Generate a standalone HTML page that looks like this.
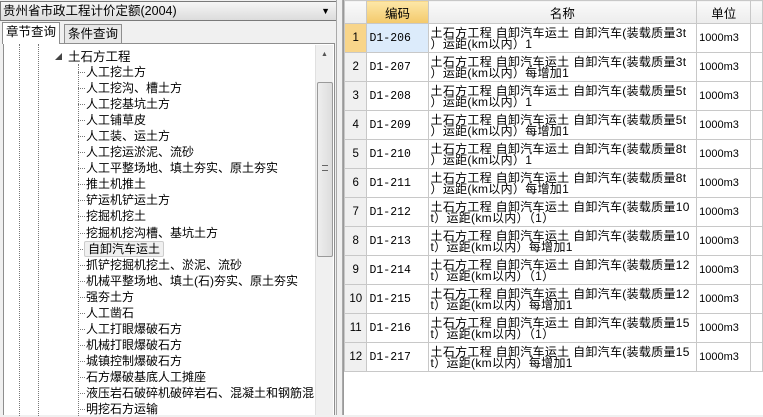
<!DOCTYPE html>
<html><head><meta charset="utf-8"><style>
*{margin:0;padding:0;box-sizing:border-box}
body{width:763px;height:415px;background:#f0f0f0;font-family:"Liberation Sans","Noto Sans CJK SC","WenQuanYi Zen Hei",sans-serif;font-size:12px;color:#000;position:relative;overflow:hidden}
.abs{position:absolute}
.dd{left:0;top:1px;width:337px;height:20px;border:1px solid #7a7a7a;background:linear-gradient(#f6f6f6,#dcdcdc);font-size:12.5px;line-height:18px;padding-left:2px}
.tab{top:24px;height:19px;border:1px solid #8e8e8e;border-bottom:none;background:#e8e8e8;line-height:18px;padding:0 3px;font-size:12.5px}
.tree{left:3px;top:43px;width:332px;height:372px;border:1px solid #8e8e8e;border-bottom:none;background:#fff}
.vl{border-left:1px dotted #777;width:0}
.it{left:86px;height:16px;line-height:16px;white-space:nowrap;font-size:12px}
.hd{left:78px;width:7px;border-top:1px dotted #777}
.sb{left:315px;top:45px;width:18px;height:370px;background:#f0f0f0;border-left:1px solid #e0e0e0}
.grid{left:343px;top:0;width:420px;height:415px;background:#fff;border-left:1px solid #999}
table{border-collapse:collapse;position:absolute;left:0;top:0;font-size:11px;table-layout:fixed}
td{border:1px solid #c8c8c8;height:29px;line-height:11px;vertical-align:middle;padding-left:2px;overflow:hidden;white-space:nowrap}
th{height:23px;font-weight:normal;font-size:12.5px;border:1px solid #c8c8c8;background:linear-gradient(#fafafa,#ececec)}
td.n{background:#f0f0f0;text-align:center;padding:0;font-size:11.5px}
td.c{font-family:"Liberation Mono",monospace;font-size:11.5px}
.nm{font-size:12px;line-height:11.5px;letter-spacing:0.3px;padding-top:2px}
</style></head><body>
<div class="abs dd">贵州省市政工程计价定额(2004)<span class="abs" style="right:6px;top:0;font-size:9px">▼</span></div>
<div class="abs tab" style="left:2px;top:22px;height:22px;background:#fff;z-index:2;border-color:#8e8e8e">章节查询</div>
<div class="abs tab" style="left:64px">条件查询</div>
<div class="abs tree">
<div class="abs vl" style="left:15px;top:0;height:372px"></div>
<div class="abs vl" style="left:34px;top:0;height:372px"></div>
<div class="abs vl" style="left:74px;top:20px;height:352px"></div>
<div class="abs" style="left:51px;top:8px;font-size:7px;color:#444">◢</div>
<div class="abs it" style="left:64px;top:5px;font-size:12.5px">土石方工程</div>
</div>
<div id="items"></div>
<div class="abs sb"><div class="abs" style="left:5px;top:6px;font-size:7px;color:#555">▲</div>
<div class="abs" style="left:1px;top:37px;width:16px;height:175px;border:1px solid #9a9a9a;border-radius:2px;background:linear-gradient(90deg,#eee,#ddd)"><div style="position:absolute;left:4px;top:82px;width:6px;height:6px;border-top:1px solid #666;border-bottom:1px solid #666"></div></div></div>
<div class="abs" style="left:336px;top:0;width:7px;height:415px;background:#f0f0f0;border-left:1px solid #aaa;border-right:1px solid #aaa"></div>
<div class="abs grid">
<table>
<tr><th style="width:23px"></th><th style="width:62px;background:linear-gradient(#fde7a8,#f3c96b)">编码</th><th style="width:269px">名称</th><th style="width:55px">单位</th><th style="width:12px"></th></tr>
<tbody id="rows"></tbody>
</table>
</div>
<script>
var t=["人工挖土方","人工挖沟、槽土方","人工挖基坑土方","人工铺草皮","人工装、运土方","人工挖运淤泥、流砂","人工平整场地、填土夯实、原土夯实","推土机推土","铲运机铲运土方","挖掘机挖土","挖掘机挖沟槽、基坑土方","自卸汽车运土","抓铲挖掘机挖土、淤泥、流砂","机械平整场地、填土(石)夯实、原土夯实","强夯土方","人工凿石","人工打眼爆破石方","机械打眼爆破石方","城镇控制爆破石方","石方爆破基底人工摊座","液压岩石破碎机破碎岩石、混凝土和钢筋混","明挖石方运输"];
var h="";t.forEach(function(s,i){var y=64+i*16.05;h+='<div class="abs hd" style="top:'+(y+8)+'px"></div><div class="abs it" style="top:'+y+'px;'+(i==11?'background:#f0f0f0;border:1px solid #ccc;border-radius:2px;padding:0 3px;left:84px;line-height:14px':'')+(i==20?'width:229px;overflow:hidden':'')+'">'+s+'</div>';});
document.getElementById("items").innerHTML=h;
var w=["3t","3t","5t","5t","8t","8t","10","10","12","12","15","15"],r="";
for(var i=0;i<12;i++){var a=i%2==0?(i<6?"1":"（1）"):"每增加1";var pre=i>=6?"t":"";
r+='<tr><td class="n"'+(i==0?' style="background:#f8d58a"':'')+'>'+(i+1)+'</td><td class="c"'+(i==0?' style="background:#dcebfb"':'')+'>D1-'+(206+i)+'</td><td class="nm">土石方工程 自卸汽车运土 自卸汽车(装载质量'+w[i]+'<br>'+pre+'）运距(km以内）'+a+'</td><td>1000m3</td><td></td></tr>';}
document.getElementById("rows").innerHTML=r;
</script>
</body></html>
